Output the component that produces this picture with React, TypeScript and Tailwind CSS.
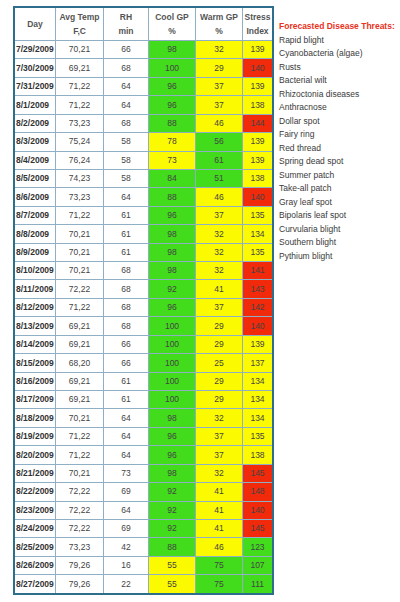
type Row = [string, string, string, string, string, string];

const rows: Row[] = [
    ['7/29/2009', '70,21', '66', '98', '32', '139'],
    ['7/30/2009', '69,21', '68', '100', '29', '140'],
    ['7/31/2009', '71,22', '64', '96', '37', '139'],
    ['8/1/2009', '71,22', '64', '96', '37', '138'],
    ['8/2/2009', '73,23', '68', '88', '46', '144'],
    ['8/3/2009', '75,24', '58', '78', '56', '139'],
    ['8/4/2009', '76,24', '58', '73', '61', '139'],
    ['8/5/2009', '74,23', '58', '84', '51', '138'],
    ['8/6/2009', '73,23', '64', '88', '46', '140'],
    ['8/7/2009', '71,22', '61', '96', '37', '135'],
    ['8/8/2009', '70,21', '61', '98', '32', '134'],
    ['8/9/2009', '70,21', '61', '98', '32', '135'],
    ['8/10/2009', '70,21', '68', '98', '32', '141'],
    ['8/11/2009', '72,22', '68', '92', '41', '143'],
    ['8/12/2009', '71,22', '68', '96', '37', '142'],
    ['8/13/2009', '69,21', '68', '100', '29', '140'],
    ['8/14/2009', '69,21', '66', '100', '29', '139'],
    ['8/15/2009', '68,20', '66', '100', '25', '137'],
    ['8/16/2009', '69,21', '61', '100', '29', '134'],
    ['8/17/2009', '69,21', '61', '100', '29', '134'],
    ['8/18/2009', '70,21', '64', '98', '32', '134'],
    ['8/19/2009', '71,22', '64', '96', '37', '135'],
    ['8/20/2009', '71,22', '64', '96', '37', '138'],
    ['8/21/2009', '70,21', '73', '98', '32', '145'],
    ['8/22/2009', '72,22', '69', '92', '41', '148'],
    ['8/23/2009', '72,22', '64', '92', '41', '140'],
    ['8/24/2009', '72,22', '69', '92', '41', '145'],
    ['8/25/2009', '73,23', '42', '88', '46', '123'],
    ['8/26/2009', '79,26', '16', '55', '75', '107'],
    ['8/27/2009', '79,26', '22', '55', '75', '111'],
];

const threats = [
    'Rapid blight',
    'Cyanobacteria (algae)',
    'Rusts',
    'Bacterial wilt',
    'Rhizoctonia diseases',
    'Anthracnose',
    'Dollar spot',
    'Fairy ring',
    'Red thread',
    'Spring dead spot',
    'Summer patch',
    'Take-all patch',
    'Gray leaf spot',
    'Bipolaris leaf spot',
    'Curvularia blight',
    'Southern blight',
    'Pythium blight',
];

const GREEN = 'bg-[#42dc1c]';
const YELLOW = 'bg-[#fcfa00]';
const RED = 'bg-[#f02a0a]';

function coolColor(v: number) {
    return v >= 80 ? GREEN : YELLOW;
}

function warmColor(v: number) {
    return v >= 50 ? GREEN : YELLOW;
}

function stressColor(v: number) {
    if (v >= 140) return RED;
    if (v >= 130) return YELLOW;
    return GREEN;
}

const cell = 'flex items-center justify-center border-[#8fb0c4]';

export default function App() {
    return (
        <div className="flex h-[602px] w-[400px] items-start bg-white pt-[6px] pl-[13px] font-['Liberation_Sans',Arial,sans-serif] text-[8.5px] text-[#444]">
            {/* Table */}
            <div className="w-[261px] border-2 border-[#2c6e8c]">
                {/* Header */}
                <div className="flex h-[32px] font-bold leading-[14px] text-[#555]">
                    <div className={`${cell} w-[41px] border-r`}>Day</div>
                    <div className={`${cell} w-[48px] border-r text-center`}>
                        Avg Temp
                        <br />
                        F,C
                    </div>
                    <div className={`${cell} w-[45px] border-r text-center`}>
                        RH
                        <br />
                        min
                    </div>
                    <div className={`${cell} w-[47px] border-r text-center`}>
                        Cool GP
                        <br />%
                    </div>
                    <div className={`${cell} w-[47px] border-r text-center`}>
                        Warm GP
                        <br />%
                    </div>
                    <div className={`${cell} flex-1 text-center`}>
                        Stress
                        <br />
                        Index
                    </div>
                </div>

                {/* Rows */}
                {rows.map((r, i) => (
                    <div key={i} className="flex h-[18.43px] border-t border-[#8fb0c4]">
                        <div className={`${cell} w-[41px] justify-start border-r pl-[1px] font-bold text-[#333]`}>
                            {r[0]}
                        </div>
                        <div className={`${cell} w-[48px] border-r`}>{r[1]}</div>
                        <div className={`${cell} w-[45px] border-r`}>{r[2]}</div>
                        <div className={`${cell} w-[47px] border-r ${coolColor(+r[3])}`}>{r[3]}</div>
                        <div className={`${cell} w-[47px] border-r ${warmColor(+r[4])}`}>{r[4]}</div>
                        <div className={`${cell} flex-1 ${stressColor(+r[5])}`}>{r[5]}</div>
                    </div>
                ))}
            </div>

            {/* Threat list */}
            <div className="ml-[5px] flex flex-col pt-[14px] text-[8.5px] leading-[13.5px] text-[#3a3a3a]">
                <div className="font-bold text-[#e8321c]">Forecasted Disease Threats:</div>
                {threats.map((t) => (
                    <div key={t}>{t}</div>
                ))}
            </div>
        </div>
    );
}
